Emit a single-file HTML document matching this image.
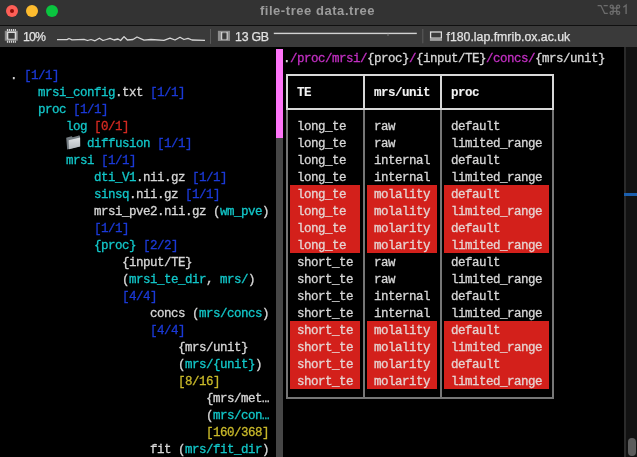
<!DOCTYPE html>
<html><head><meta charset="utf-8">
<style>
html,body{margin:0;padding:0;}
body{width:637px;height:457px;overflow:hidden;background:#000;position:relative;font-family:"Liberation Sans",sans-serif;}
.t{position:absolute;white-space:pre;font-family:"Liberation Mono",monospace;font-size:12.5px;letter-spacing:-0.5px;line-height:17px;color:#d6d6d6;-webkit-text-stroke:0.3px currentColor;}
.bx{position:absolute;}
#title{position:absolute;left:0;top:0;width:637px;height:25px;background:#333333;}
#sep{position:absolute;left:0;top:25px;width:637px;height:1.3px;background:#101010;}
#status{position:absolute;left:0;top:26.3px;width:637px;height:20.5px;background:#3a3a3a;}
.light{position:absolute;top:5px;width:12px;height:12px;border-radius:50%;}
.sb{position:absolute;color:#e2e2e2;-webkit-text-stroke:0.25px currentColor;font-size:12.3px;line-height:15px;white-space:pre;}
</style></head><body>
<div style="position:absolute;left:0;top:0;width:637px;height:457px;will-change:transform">
<div id="title">
 <div class="light" style="left:6px;background:#fe5f57"></div>
 <div style="position:absolute;left:9.7px;top:8.6px;width:4.8px;height:4.8px;border-radius:50%;background:#8f0c06"></div>
 <div class="light" style="left:26px;background:#febc2e"></div>
 <div class="light" style="left:46px;background:#0ac53f"></div>
 <div style="position:absolute;left:-1px;width:637px;top:3.6px;text-align:center;font-weight:bold;font-size:13px;letter-spacing:0.55px;line-height:14px;color:#9b9b9b">file-tree data.tree</div>
 <svg style="position:absolute;left:0;top:0" width="637" height="25" viewBox="0 0 637 25"><g fill="none" stroke="#6c6c6c" stroke-width="1.25">
  <path d="M597.6,5.6 H600.9 L604.6,13.3 H607.8 M603.6,5.6 H607.8"/>
  <path d="M613.2,6.55 V12.85 M616.6,6.55 V12.85 M611.65,8.1 H618.15 M611.65,11.3 H618.15"/><circle cx="611.65" cy="6.55" r="1.55"/><circle cx="618.15" cy="6.55" r="1.55"/><circle cx="611.65" cy="12.85" r="1.55"/><circle cx="618.15" cy="12.85" r="1.55"/>
  <path d="M626.1,13.9 V5.2 L623.3,7.2" stroke-width="1.4"/>
 </g></svg>
</div>
<div id="sep"></div>
<div id="status"></div>
<svg style="position:absolute;left:0;top:0" width="637" height="47" viewBox="0 0 637 47">
 <rect x="4.8" y="30.8" width="13" height="9.9" fill="#8c8c8c"/>
 <rect x="6.8" y="31.7" width="9.4" height="7.9" fill="#dadada"/>
 <rect x="8.3" y="33" width="6.4" height="5.7" fill="#3a3a3a"/>
 <g fill="#d4d4d4">
  <rect x="6.9" y="29" width="1.2" height="2"/><rect x="8.8" y="29" width="1.2" height="2"/><rect x="10.8" y="29" width="1.2" height="2"/><rect x="12.8" y="29" width="1.2" height="2"/><rect x="14.7" y="29" width="1.2" height="2"/>
  <rect x="6.9" y="40.6" width="1.2" height="2.2"/><rect x="8.8" y="40.6" width="1.2" height="2.2"/><rect x="10.8" y="40.6" width="1.2" height="2.2"/><rect x="12.8" y="40.6" width="1.2" height="2.2"/><rect x="14.7" y="40.6" width="1.2" height="2.2"/>
 </g>
 <polyline fill="none" stroke="#d6d6d6" stroke-width="1.3" stroke-linejoin="round" points="57,39.6 67,39.6 69,38.5 72,39.8 84,39.3 87.5,40.5 91,39.5 95,40.8 99.4,38.2 103,40.5 106.5,39.5 110,38.3 114,40 118,39 120.6,40.5 124,36.6 127.4,40 133,39.5 137,37 144,40.2 151,39.5 164,40.3 170,38.2 175,40 180,37.2 184,39.5 188,38.3 192,40 205,40.3"/>
 <rect x="210" y="29" width="1" height="14.8" fill="#5c5c5c"/>
 <rect x="217.9" y="30.8" width="12.1" height="10.1" fill="#8e8e8e"/>
 <rect x="221.2" y="32" width="1.1" height="7.8" fill="#e0e0e0"/>
 <rect x="226.5" y="32" width="1.1" height="7.8" fill="#e0e0e0"/>
 <rect x="222.3" y="33.2" width="4.2" height="5.7" fill="#3a3a3a"/>
 <rect x="273.8" y="32.7" width="143" height="1.4" fill="#d2d2d2"/>
 <rect x="387.6" y="33.5" width="0.8" height="2.5" fill="#8a8a8a"/>
 <rect x="422.3" y="29" width="1" height="14.3" fill="#5c5c5c"/>
 <rect x="429.9" y="31" width="12.1" height="9.9" fill="#a0a0a0"/>
 <rect x="430" y="32" width="1.3" height="6" fill="#dcdcdc"/>
 <rect x="440.7" y="32" width="1.3" height="6" fill="#dcdcdc"/>
 <rect x="431.3" y="33" width="9.4" height="4.2" fill="#3a3a3a"/>
</svg>
<div class="sb" style="left:23px;top:29.5px;letter-spacing:-0.8px">10%</div>
<div class="sb" style="left:235px;top:29.5px;letter-spacing:-0.2px">13 GB</div>
<div class="sb" style="left:446.5px;top:29.5px">f180.lap.fmrib.ox.ac.uk</div>

<div id="term" style="position:absolute;left:0;top:0;width:637px;height:457px;will-change:transform">
<div class="t" style="left:10.00px;top:68.00px"><span style="color:#d6d6d6">. </span><span style="color:#1b3ad8">[1/1]</span></div>
<div class="t" style="left:38.00px;top:85.00px"><span style="color:#12c6c8">mrsi_config</span><span style="color:#d6d6d6">.txt </span><span style="color:#1b3ad8">[1/1]</span></div>
<div class="t" style="left:38.00px;top:102.00px"><span style="color:#12c6c8">proc</span><span style="color:#1b3ad8"> [1/1]</span></div>
<div class="t" style="left:66.00px;top:119.00px"><span style="color:#12c6c8">log</span><span style="color:#d6d6d6"> </span><span style="color:#d42a22">[0/1]</span></div>
<div class="t" style="left:87.00px;top:136.00px"><span style="color:#12c6c8">diffusion</span><span style="color:#1b3ad8"> [1/1]</span></div>
<div class="t" style="left:66.00px;top:153.00px"><span style="color:#12c6c8">mrsi</span><span style="color:#1b3ad8"> [1/1]</span></div>
<div class="t" style="left:94.00px;top:170.00px"><span style="color:#12c6c8">dti_V1</span><span style="color:#d6d6d6">.nii.gz </span><span style="color:#1b3ad8">[1/1]</span></div>
<div class="t" style="left:94.00px;top:187.00px"><span style="color:#12c6c8">sinsq</span><span style="color:#d6d6d6">.nii.gz </span><span style="color:#1b3ad8">[1/1]</span></div>
<div class="t" style="left:94.00px;top:204.00px"><span style="color:#d6d6d6">mrsi_pve2.nii.gz (</span><span style="color:#12c6c8">wm_pve</span><span style="color:#d6d6d6">)</span></div>
<div class="t" style="left:94.00px;top:221.00px"><span style="color:#1b3ad8">[1/1]</span></div>
<div class="t" style="left:94.00px;top:238.00px"><span style="color:#12c6c8">{proc}</span><span style="color:#1b3ad8"> [2/2]</span></div>
<div class="t" style="left:122.00px;top:255.00px"><span style="color:#d6d6d6">{input/TE}</span></div>
<div class="t" style="left:122.00px;top:272.00px"><span style="color:#d6d6d6">(</span><span style="color:#12c6c8">mrsi_te_dir</span><span style="color:#d6d6d6">, </span><span style="color:#12c6c8">mrs/</span><span style="color:#d6d6d6">)</span></div>
<div class="t" style="left:122.00px;top:289.00px"><span style="color:#1b3ad8">[4/4]</span></div>
<div class="t" style="left:150.00px;top:306.00px"><span style="color:#d6d6d6">concs (</span><span style="color:#12c6c8">mrs/concs</span><span style="color:#d6d6d6">)</span></div>
<div class="t" style="left:150.00px;top:323.00px"><span style="color:#1b3ad8">[4/4]</span></div>
<div class="t" style="left:178.00px;top:340.00px"><span style="color:#d6d6d6">{mrs/unit}</span></div>
<div class="t" style="left:178.00px;top:357.00px"><span style="color:#d6d6d6">(</span><span style="color:#12c6c8">mrs/{unit}</span><span style="color:#d6d6d6">)</span></div>
<div class="t" style="left:178.00px;top:374.00px"><span style="color:#c9b92a">[8/16]</span></div>
<div class="t" style="left:206.00px;top:391.00px"><span style="color:#d6d6d6">{mrs/met…</span></div>
<div class="t" style="left:206.00px;top:408.00px"><span style="color:#d6d6d6">(</span><span style="color:#12c6c8">mrs/con…</span></div>
<div class="t" style="left:206.00px;top:425.00px"><span style="color:#c9b92a">[160/368]</span></div>
<div class="t" style="left:150.00px;top:442.00px"><span style="color:#d6d6d6">fit (</span><span style="color:#12c6c8">mrs/fit_dir</span><span style="color:#d6d6d6">)</span></div>
<div class="t" style="left:283.00px;top:51.00px"><span style="color:#d6d6d6">.</span><span style="color:#c22fc2">/proc/mrsi/</span><span style="color:#d6d6d6">{proc}</span><span style="color:#c22fc2">/</span><span style="color:#d6d6d6">{input/TE}</span><span style="color:#c22fc2">/concs/</span><span style="color:#d6d6d6">{mrs/unit}</span></div>
<div class="bx" style="left:290px;top:185.0px;width:70px;height:68px;background:#d3201b"></div>
<div class="bx" style="left:367px;top:185.0px;width:70px;height:68px;background:#d3201b"></div>
<div class="bx" style="left:444px;top:185.0px;width:105px;height:68px;background:#d3201b"></div>
<div class="bx" style="left:290px;top:321.0px;width:70px;height:68px;background:#d3201b"></div>
<div class="bx" style="left:367px;top:321.0px;width:70px;height:68px;background:#d3201b"></div>
<div class="bx" style="left:444px;top:321.0px;width:105px;height:68px;background:#d3201b"></div>
<div class="bx" style="left:286px;top:74.2px;width:268px;height:2px;background:#d8d8d8"></div>
<div class="bx" style="left:286px;top:108.2px;width:268px;height:2px;background:#d8d8d8"></div>
<div class="bx" style="left:286px;top:74.2px;width:2px;height:36.0px;background:#d8d8d8"></div>
<div class="bx" style="left:286px;top:110.2px;width:2px;height:288.6px;background:#767676"></div>
<div class="bx" style="left:363px;top:74.2px;width:2px;height:36.0px;background:#d8d8d8"></div>
<div class="bx" style="left:363px;top:110.2px;width:2px;height:288.6px;background:#767676"></div>
<div class="bx" style="left:440px;top:74.2px;width:2px;height:36.0px;background:#d8d8d8"></div>
<div class="bx" style="left:440px;top:110.2px;width:2px;height:288.6px;background:#767676"></div>
<div class="bx" style="left:552px;top:74.2px;width:2px;height:36.0px;background:#d8d8d8"></div>
<div class="bx" style="left:552px;top:110.2px;width:2px;height:288.6px;background:#767676"></div>
<div class="bx" style="left:286px;top:396.8px;width:268px;height:2px;background:#767676"></div>
<div class="t" style="left:297.00px;top:85.00px;font-weight:bold;-webkit-text-stroke:0.1px currentColor"><span style="color:#f2f2f2">TE</span></div>
<div class="t" style="left:374.00px;top:85.00px;font-weight:bold;-webkit-text-stroke:0.1px currentColor"><span style="color:#f2f2f2">mrs/unit</span></div>
<div class="t" style="left:451.00px;top:85.00px;font-weight:bold;-webkit-text-stroke:0.1px currentColor"><span style="color:#f2f2f2">proc</span></div>
<div class="t" style="left:297.00px;top:119.00px"><span style="color:#d6d6d6">long_te</span></div>
<div class="t" style="left:374.00px;top:119.00px"><span style="color:#d6d6d6">raw</span></div>
<div class="t" style="left:451.00px;top:119.00px"><span style="color:#d6d6d6">default</span></div>
<div class="t" style="left:297.00px;top:136.00px"><span style="color:#d6d6d6">long_te</span></div>
<div class="t" style="left:374.00px;top:136.00px"><span style="color:#d6d6d6">raw</span></div>
<div class="t" style="left:451.00px;top:136.00px"><span style="color:#d6d6d6">limited_range</span></div>
<div class="t" style="left:297.00px;top:153.00px"><span style="color:#d6d6d6">long_te</span></div>
<div class="t" style="left:374.00px;top:153.00px"><span style="color:#d6d6d6">internal</span></div>
<div class="t" style="left:451.00px;top:153.00px"><span style="color:#d6d6d6">default</span></div>
<div class="t" style="left:297.00px;top:170.00px"><span style="color:#d6d6d6">long_te</span></div>
<div class="t" style="left:374.00px;top:170.00px"><span style="color:#d6d6d6">internal</span></div>
<div class="t" style="left:451.00px;top:170.00px"><span style="color:#d6d6d6">limited_range</span></div>
<div class="t" style="left:297.00px;top:187.00px"><span style="color:#e6d2d0">long_te</span></div>
<div class="t" style="left:374.00px;top:187.00px"><span style="color:#e6d2d0">molality</span></div>
<div class="t" style="left:451.00px;top:187.00px"><span style="color:#e6d2d0">default</span></div>
<div class="t" style="left:297.00px;top:204.00px"><span style="color:#e6d2d0">long_te</span></div>
<div class="t" style="left:374.00px;top:204.00px"><span style="color:#e6d2d0">molality</span></div>
<div class="t" style="left:451.00px;top:204.00px"><span style="color:#e6d2d0">limited_range</span></div>
<div class="t" style="left:297.00px;top:221.00px"><span style="color:#e6d2d0">long_te</span></div>
<div class="t" style="left:374.00px;top:221.00px"><span style="color:#e6d2d0">molarity</span></div>
<div class="t" style="left:451.00px;top:221.00px"><span style="color:#e6d2d0">default</span></div>
<div class="t" style="left:297.00px;top:238.00px"><span style="color:#e6d2d0">long_te</span></div>
<div class="t" style="left:374.00px;top:238.00px"><span style="color:#e6d2d0">molarity</span></div>
<div class="t" style="left:451.00px;top:238.00px"><span style="color:#e6d2d0">limited_range</span></div>
<div class="t" style="left:297.00px;top:255.00px"><span style="color:#d6d6d6">short_te</span></div>
<div class="t" style="left:374.00px;top:255.00px"><span style="color:#d6d6d6">raw</span></div>
<div class="t" style="left:451.00px;top:255.00px"><span style="color:#d6d6d6">default</span></div>
<div class="t" style="left:297.00px;top:272.00px"><span style="color:#d6d6d6">short_te</span></div>
<div class="t" style="left:374.00px;top:272.00px"><span style="color:#d6d6d6">raw</span></div>
<div class="t" style="left:451.00px;top:272.00px"><span style="color:#d6d6d6">limited_range</span></div>
<div class="t" style="left:297.00px;top:289.00px"><span style="color:#d6d6d6">short_te</span></div>
<div class="t" style="left:374.00px;top:289.00px"><span style="color:#d6d6d6">internal</span></div>
<div class="t" style="left:451.00px;top:289.00px"><span style="color:#d6d6d6">default</span></div>
<div class="t" style="left:297.00px;top:306.00px"><span style="color:#d6d6d6">short_te</span></div>
<div class="t" style="left:374.00px;top:306.00px"><span style="color:#d6d6d6">internal</span></div>
<div class="t" style="left:451.00px;top:306.00px"><span style="color:#d6d6d6">limited_range</span></div>
<div class="t" style="left:297.00px;top:323.00px"><span style="color:#e6d2d0">short_te</span></div>
<div class="t" style="left:374.00px;top:323.00px"><span style="color:#e6d2d0">molality</span></div>
<div class="t" style="left:451.00px;top:323.00px"><span style="color:#e6d2d0">default</span></div>
<div class="t" style="left:297.00px;top:340.00px"><span style="color:#e6d2d0">short_te</span></div>
<div class="t" style="left:374.00px;top:340.00px"><span style="color:#e6d2d0">molality</span></div>
<div class="t" style="left:451.00px;top:340.00px"><span style="color:#e6d2d0">limited_range</span></div>
<div class="t" style="left:297.00px;top:357.00px"><span style="color:#e6d2d0">short_te</span></div>
<div class="t" style="left:374.00px;top:357.00px"><span style="color:#e6d2d0">molarity</span></div>
<div class="t" style="left:451.00px;top:357.00px"><span style="color:#e6d2d0">default</span></div>
<div class="t" style="left:297.00px;top:374.00px"><span style="color:#e6d2d0">short_te</span></div>
<div class="t" style="left:374.00px;top:374.00px"><span style="color:#e6d2d0">molarity</span></div>
<div class="t" style="left:451.00px;top:374.00px"><span style="color:#e6d2d0">limited_range</span></div>

</div>
<svg style="position:absolute;left:0;top:0" width="100" height="160" viewBox="0 0 100 160">
 <defs><linearGradient id="fg" x1="0" y1="0" x2="0" y2="1"><stop offset="0" stop-color="#dfe2e5"/><stop offset="1" stop-color="#b4b9bd"/></linearGradient></defs>
 <path d="M66.2,137.8 L71.6,136.3 L72.6,137.3 L77.5,135.9 L79.3,135.2 L80,136.5 L80.2,146.2 L67.2,149.6 Z" fill="#727a80"/>
 <path d="M68.6,140.2 L80.1,137.6 L80.1,146.4 L69,149.2 Z" fill="url(#fg)"/>
</svg>
<!-- left pane scrollbar -->
<div class="bx" style="left:276px;top:49px;width:7px;height:408px;background:#464646"></div>
<div class="bx" style="left:276px;top:49px;width:7px;height:89.2px;background:#ff75f8"></div>
<!-- iterm scrollbar strip -->
<div class="bx" style="left:624px;top:47px;width:1.6px;height:410px;background:#2a2a2a"></div>
<div class="bx" style="left:625.6px;top:47px;width:11.4px;height:410px;background:#121212"></div>
<div class="bx" style="left:624px;top:193px;width:13px;height:3px;background:#1b5fae"></div>
<div class="bx" style="left:628px;top:437.7px;width:8px;height:18.5px;border-radius:4px;background:#5c5c5c"></div>
</div>
</body></html>
